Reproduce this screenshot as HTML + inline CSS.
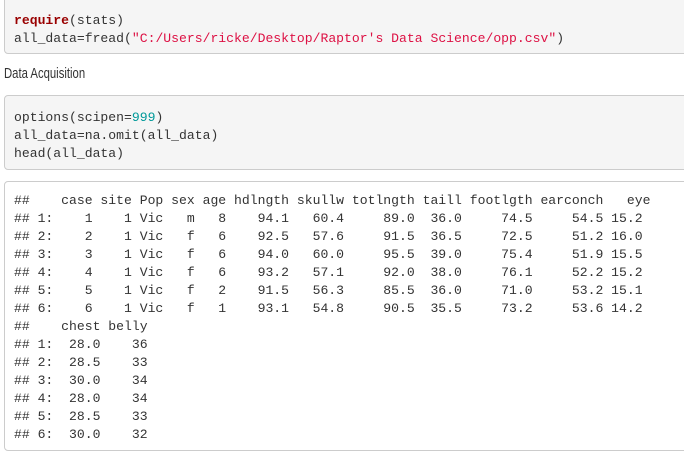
<!DOCTYPE html>
<html><head><style>
body{margin:0;background:#fff;width:684px;height:452px;overflow:hidden;position:relative;font-family:"Liberation Sans",sans-serif;}
pre{margin:0;position:absolute;font-family:"Liberation Mono",monospace;font-size:13.1px;line-height:18px;color:#333;border:1px solid #ccc;border-radius:4px;padding:0 0 0 9px;box-sizing:border-box;}
.code{background:#f5f5f5;}
.out{background:#fff;}
.k{color:#990000;font-weight:bold}
.s{color:#dd1144}
.n{color:#009999}
.t{position:absolute;left:4px;top:66px;font-size:14.5px;color:#333;transform:scaleX(0.78);transform-origin:0 0;white-space:nowrap}
</style></head><body>
<pre class="code" style="left:4px;top:-8px;width:690px;height:62px;padding-top:19px">
<span class="k">require</span>(stats)
all_data=fread(<span class="s">"C:/Users/ricke/Desktop/Raptor's Data Science/opp.csv"</span>)</pre>
<div class="t">Data Acquisition</div>
<pre class="code" style="left:4px;top:95px;width:690px;height:75px;padding-top:13px">options(scipen=<span class="n">999</span>)
all_data=na.omit(all_data)
head(all_data)</pre>
<pre class="out" style="left:4px;top:181px;width:690px;height:270px;padding-top:10px">##    case site Pop sex age hdlngth skullw totlngth taill footlgth earconch   eye
## 1:    1    1 Vic   m   8    94.1   60.4     89.0  36.0     74.5     54.5 15.2
## 2:    2    1 Vic   f   6    92.5   57.6     91.5  36.5     72.5     51.2 16.0
## 3:    3    1 Vic   f   6    94.0   60.0     95.5  39.0     75.4     51.9 15.5
## 4:    4    1 Vic   f   6    93.2   57.1     92.0  38.0     76.1     52.2 15.2
## 5:    5    1 Vic   f   2    91.5   56.3     85.5  36.0     71.0     53.2 15.1
## 6:    6    1 Vic   f   1    93.1   54.8     90.5  35.5     73.2     53.6 14.2
##    chest belly
## 1:  28.0    36
## 2:  28.5    33
## 3:  30.0    34
## 4:  28.0    34
## 5:  28.5    33
## 6:  30.0    32</pre>
</body></html>
